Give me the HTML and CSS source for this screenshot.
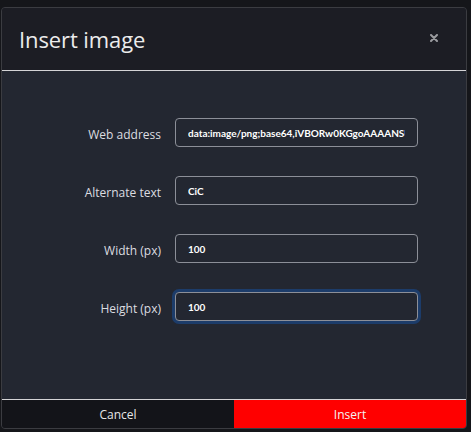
FILE: index.html
```html
<!DOCTYPE html>
<html>
<head>
<meta charset="utf-8">
<link rel="stylesheet" href="styles.css">
</head>
<body>
<div class="dialog">
  <div class="header">
    <h1 class="title">Insert image</h1>
    <svg class="close" width="8" height="8" viewBox="0 0 8 8"><path d="M1 1L7 7M7 1L1 7" stroke="#9a9b9f" stroke-width="2" stroke-linecap="round"/></svg>
  </div>
  <div class="content">
    <div class="row">
      <label class="label">Web address</label>
      <input class="field" type="text" value="data:image/png;base64,iVBORw0KGgoAAAANSUhEUgAAAGQAAABkCAYAAABw4pVUAAAA">
    </div>
    <div class="row">
      <label class="label">Alternate text</label>
      <input class="field" type="text" value="CiC">
    </div>
    <div class="row">
      <label class="label">Width (px)</label>
      <input class="field" type="text" value="100">
    </div>
    <div class="row">
      <label class="label">Height (px)</label>
      <input class="field focused" type="text" value="100">
    </div>
  </div>
  <div class="footer">
    <button class="btn cancel">Cancel</button>
    <button class="btn insert">Insert</button>
  </div>
</div>
</body>
</html>
```
FILE: styles.css
```css
html, body {
  margin: 0;
  padding: 0;
  background: #15161a;
  width: 471px;
  height: 432px;
  overflow: hidden;
  font-family: "Open Sans", "Liberation Sans", sans-serif;
}
.dialog {
  margin: 7px 0 0 1px;
  width: 466px;
  height: 422px;
  box-sizing: border-box;
  border: 1px solid #3b3c41;
  border-radius: 4px;
  background: #232731;
  display: flex;
  flex-direction: column;
  overflow: hidden;
}
.header {
  height: 62px;
  flex: none;
  background: #1c1d24;
  border-bottom: 1px solid #d4d4d6;
  display: flex;
  align-items: center;
  justify-content: space-between;
  padding: 0 28px 0 17px;
}
.title {
  margin: 0;
  font-size: 22px;
  font-weight: 400;
  color: #ececec;
  letter-spacing: -0.1px;
}
.close {
  display: block;
  margin-top: -2px;
}
.content {
  flex: 1;
  display: flex;
  flex-direction: column;
  gap: 29px;
  padding-top: 47px;
}
.row {
  display: flex;
  align-items: center;
}
.label {
  width: 159px;
  text-align: right;
  font-size: 12px;
  color: #dcdde0;
  padding: 3px 14px 0 0;
  box-sizing: content-box;
}
.field {
  width: 243px;
  height: 29px;
  box-sizing: border-box;
  background: #232731;
  border: 1px solid #8c8f98;
  border-radius: 4px;
  color: #ffffff;
  font-family: Lato, "Open Sans", sans-serif;
  font-size: 10px;
  font-weight: 700;
  padding: 0 12px;
  outline: none;
}
.focused {
  box-shadow: 0 0 0 3px #1c3c6a;
}
.footer {
  flex: none;
  display: flex;
  border-top: 1px solid #d4d4d6;
  height: 28px;
}
.btn {
  flex: 1;
  border: none;
  margin: 0;
  font-family: "Open Sans", "Liberation Sans", sans-serif;
  font-size: 12px;
  color: #e6e6e6;
  padding: 0;
}
.cancel {
  background: #131419;
}
.insert {
  background: #ff0000;
  color: #f4f4f4;
}
```
